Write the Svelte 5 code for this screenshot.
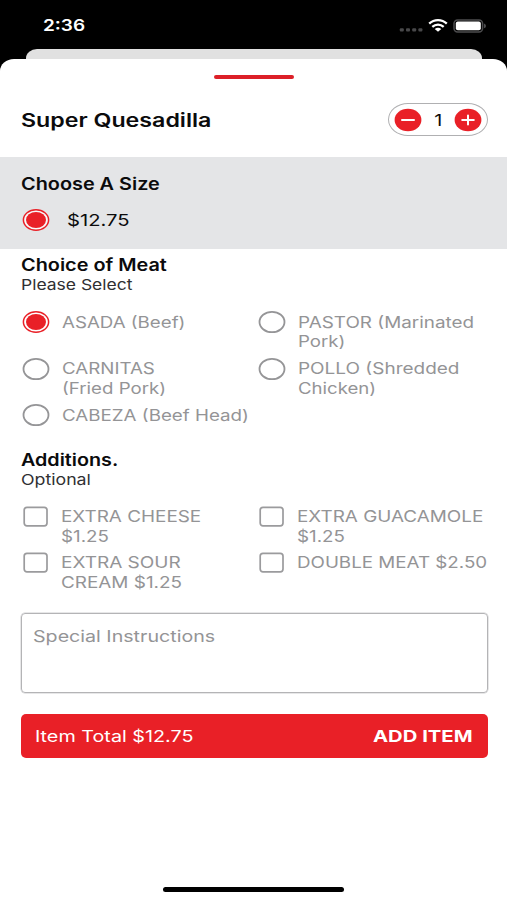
<script>
  const meats = [
    [
      { lines: [['ASADA (Beef)', 123]], checked: true },
      { lines: [['PASTOR (Marinated', 176.5], ['Pork)', 47]] }
    ],
    [
      { lines: [['CARNITAS', 93], ['(Fried Pork)', 103.5]] },
      { lines: [['POLLO (Shredded', 161.5], ['Chicken)', 78]] }
    ],
    [{ lines: [['CABEZA (Beef Head)', 187.5]] }]
  ];

  const additions = [
    [
      { lines: [['EXTRA CHEESE', 140.5], ['$1.25', 48]] },
      { lines: [['EXTRA GUACAMOLE', 186.5], ['$1.25', 48]] }
    ],
    [
      { lines: [['EXTRA SOUR', 120], ['CREAM $1.25', 120.5]] },
      { lines: [['DOUBLE MEAT $2.50', 190]] }
    ]
  ];

  // Widens a label horizontally until it spans the given width.
  function fit(node, width) {
    node.style.transform = `scaleX(${width / node.offsetWidth})`;
  }
</script>

{#snippet label(text, width)}
  <span class="label" use:fit={width}>{text}</span>
{/snippet}

{#snippet radio(checked)}
  <svg class="radio" width="28" height="24" viewBox="0 0 28 24">
    {#if checked}
      <ellipse cx="14" cy="12" rx="12.6" ry="10.2" fill="#fff" fill-opacity=".75" stroke="#e92027" stroke-width="1.5" />
      <ellipse cx="14" cy="12" rx="10" ry="8" fill="#e92027" />
    {:else}
      <ellipse cx="14" cy="12" rx="12.5" ry="10.2" fill="#fff" stroke="#959597" stroke-width="1.8" />
    {/if}
  </svg>
{/snippet}

<div class="screen">
  <header class="status">
    <div class="time">{@render label('2:36', 42)}</div>
    <svg width="88" height="16" viewBox="0 0 88 16">
      <g fill="#48484a">
        <rect x="1.8" y="10.2" width="4" height="3.2" rx="1" />
        <rect x="8" y="10.2" width="4" height="3.2" rx="1" />
        <rect x="14.2" y="10.2" width="4" height="3.2" rx="1" />
        <rect x="20.4" y="10.2" width="4" height="3.2" rx="1" />
      </g>
      <g fill="none" stroke="#fff" stroke-width="2.3">
        <path d="M31.2 5.7 C36.2 .9 43.8 .9 48.8 5.7" />
        <path d="M34.3 8.8 C37.6 5.8 42.4 5.8 45.7 8.8" />
      </g>
      <path d="M36.7 11 Q40 8.6 43.3 11 L40 13.8 Z" fill="#fff" />
      <rect x="56" y="1.9" width="28.6" height="12" rx="3.6" fill="none" stroke="#4c4c4e" stroke-width="1.5" />
      <rect x="57.8" y="3.5" width="25" height="8.8" rx="2" fill="#fff" />
      <path d="M86 5.6 Q88 6.3 88 7.9 Q88 9.5 86 10.2 Z" fill="#4c4c4e" />
    </svg>
  </header>

  <div class="behind"></div>
  <main class="sheet">
    <div class="grabber"></div>
    <div class="title">
      <span class="name">{@render label('Super Quesadilla', 190.5)}</span>
      <div class="stepper">
        <svg width="28" height="24" viewBox="0 0 28 24">
          <ellipse cx="14" cy="12" rx="13.4" ry="11.2" fill="#e92027" />
          <path d="M8 12H20" stroke="#fff" stroke-width="2" stroke-linecap="round" />
        </svg>
        <span class="count">1</span>
        <svg width="28" height="24" viewBox="0 0 28 24">
          <ellipse cx="14" cy="12" rx="13.4" ry="11.2" fill="#e92027" />
          <path d="M8.2 12H19.8M14 7.4V16.6" stroke="#fff" stroke-width="2" stroke-linecap="round" />
        </svg>
      </div>
    </div>

    <section class="size">
      <h2>{@render label('Choose A Size', 139)}</h2>
      <div class="price">{@render radio(true)}{@render label('$12.75', 62.5)}</div>
    </section>

    <section class="meat">
      <h2>{@render label('Choice of Meat', 146)}</h2>
      <p>{@render label('Please Select', 111)}</p>
      <div class="options">
        {#each meats as row}
          <div class="row">
            {#each row as item}
              <div class="option">
                {@render radio(item.checked)}
                <div class="lines">
                  {#each item.lines as [text, width]}
                    <div>{@render label(text, width)}</div>
                  {/each}
                </div>
              </div>
            {/each}
          </div>
        {/each}
      </div>
    </section>

    <section class="additions">
      <h2>{@render label('Additions.', 97.5)}</h2>
      <p>{@render label('Optional', 69.5)}</p>
      <div class="options">
        {#each additions as row}
          <div class="row">
            {#each row as item}
              <div class="option">
                <svg class="box" width="26" height="22" viewBox="0 0 26 22">
                  <rect x="1.2" y="1.3" width="22.8" height="18.6" rx="2.8" fill="#fff" stroke="#9b9b9d" stroke-width="1.7" />
                </svg>
                <div class="lines">
                  {#each item.lines as [text, width]}
                    <div>{@render label(text, width)}</div>
                  {/each}
                </div>
              </div>
            {/each}
          </div>
        {/each}
      </div>
    </section>

    <div class="notes">{@render label('Special Instructions', 182)}</div>

    <div class="total">
      {@render label('Item Total $12.75', 159)}
      <strong>{@render label('ADD ITEM', 99.5)}</strong>
    </div>

    <div class="home"></div>
  </main>
</div>

<style>
  :global(body) {
    margin: 0;
    background: #000;
  }
  .screen {
    width: 507px;
    height: 900px;
    overflow: hidden;
    display: flex;
    flex-direction: column;
    background: #000;
    color: #0b0b0c;
    font-family: Inter, "Liberation Sans", sans-serif;
  }
  .label {
    display: inline-block;
    white-space: nowrap;
    transform-origin: 0 50%;
  }
  .status {
    height: 49px;
    flex: none;
    box-sizing: border-box;
    padding: 16px 21px 0 42.5px;
    display: flex;
    justify-content: space-between;
    align-items: flex-start;
    color: #fff;
  }
  .status svg {
    margin-top: 2px;
  }
  .time {
    font-size: 15.8px;
    line-height: 20px;
    font-weight: 600;
  }
  .behind {
    flex: none;
    height: 10px;
    margin: 0 25px 0 26px;
    border-radius: 11px 11px 0 0 / 9px 9px 0 0;
    background: #e1e1e1;
  }
  .sheet {
    flex: 1;
    display: flex;
    flex-direction: column;
    background: #fff;
    border-radius: 14px 14px 0 0 / 12px 12px 0 0;
  }
  .grabber {
    width: 80px;
    height: 4px;
    margin: 16px 0 0 214px;
    border-radius: 2px;
    background: #dc2028;
  }
  .title {
    height: 78px;
    box-sizing: border-box;
    padding: 2px 19px 0 20.5px;
    display: flex;
    align-items: center;
    justify-content: space-between;
    font-size: 18.5px;
    font-weight: 600;
  }
  .name {
    padding-top: 2px;
  }
  .stepper {
    width: 100px;
    height: 33px;
    box-sizing: border-box;
    padding: 0 5px;
    border: 1.5px solid #b0b0b2;
    border-radius: 20px / 16.5px;
    display: flex;
    align-items: center;
    justify-content: space-between;
    margin-top: 1px;
  }
  .count {
    font-size: 16.5px;
    font-weight: 400;
    transform: scaleX(1.2);
  }
  h2 {
    margin: 0;
    font-size: 17px;
    line-height: 20px;
    font-weight: 600;
  }
  p {
    margin: 0;
    font-size: 14.8px;
    line-height: 20px;
    color: #303032;
  }
  .size {
    height: 92px;
    box-sizing: border-box;
    padding: 17px 20.7px 0;
    background: #e4e5e7;
  }
  .price {
    height: 24px;
    margin-top: 13.7px;
    display: flex;
    align-items: center;
    gap: 16.8px;
    padding-left: 1.3px;
    font-size: 16.5px;
  }
  .meat {
    height: 195px;
    box-sizing: border-box;
    padding: 6px 0 0 20.8px;
    flex: none;
    height: 200.2px;
  }
  .options {
    color: #949496;
    font-size: 15.5px;
    line-height: 19.6px;
  }
  .lines {
    padding-top: 0.7px;
  }
  .meat .options {
    margin-top: 17.2px;
  }
  .row {
    display: flex;
    height: 46.6px;
  }
  .option {
    width: 236px;
    display: flex;
    align-items: flex-start;
  }
  .radio {
    flex: none;
    display: block;
  }
  .meat .radio {
    margin: -2.2px 12px 0 1.2px;
  }
  .additions {
    height: 163.8px;
    box-sizing: border-box;
    padding: 0.8px 0 0 20.8px;
  }
  .additions .options {
    margin-top: 16.8px;
    font-size: 16px;
  }
  .additions .row {
    height: 45.7px;
  }
  .box {
    flex: none;
    display: block;
    margin: -0.8px 12.2px 0 2px;
  }
  .notes {
    height: 80px;
    box-sizing: border-box;
    margin: 0 19.5px 0 20.5px;
    padding: 12.4px 0 0 11.5px;
    border: 1.5px solid #b4b4b6;
    border-radius: 4px;
    box-shadow: 0 0 0 0.5px #d0d0d2;
    color: #949496;
    font-size: 16.2px;
    line-height: 20px;
  }
  .total {
    height: 44px;
    box-sizing: border-box;
    margin: 21px 19.5px 0 20.5px;
    padding: 0 15px 0 14.3px;
    border-radius: 5px;
    display: flex;
    align-items: center;
    justify-content: space-between;
    background: #e92027;
    color: #fff;
    font-size: 16.3px;
  }
  .total strong {
    width: 99.5px;
    font-weight: 650;
  }
  .home {
    width: 181px;
    height: 5px;
    margin: auto 0 8px 163px;
    border-radius: 2.5px;
    background: #000;
  }
</style>
